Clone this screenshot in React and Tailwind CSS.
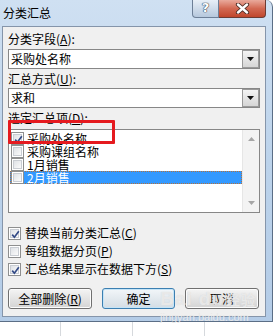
import React from "react";

function Box({ checked }) {
  return (
    <span className="flex h-[13px] w-[13px] shrink-0 border border-[#8e8f8f] bg-white p-[1px]">
      <span className="relative flex h-full w-full items-center justify-center border border-[#c9cdd3] bg-linear-to-br from-[#dfe2e6] to-[#fbfbfb]">
        {checked && (
          <svg width="9" height="9" viewBox="0 0 9 9" className="absolute left-[0px] top-[0px]">
            <path d="M1.2 4.6 L3.4 7.2 L7.8 1.2" fill="none" stroke="#334a86" strokeWidth="1.7" />
          </svg>
        )}
      </span>
    </span>
  );
}

function Combo({ value }) {
  return (
    <div className="flex h-[20px] w-full items-center border border-[#878787] bg-white">
      <span className="flex-1 pl-[2px] leading-[16px]">{value}</span>
      <span className="flex h-[18px] w-[17px] items-center justify-center border border-[#9a9a9a] bg-linear-to-b from-[#f4f4f4] to-[#d6d6d6]">
        <svg width="7" height="4" viewBox="0 0 7 4">
          <path d="M0 0 H7 L3.5 4 Z" fill="#111" />
        </svg>
      </span>
    </div>
  );
}

function Label({ text, k }) {
  return (
    <div className="h-[16px] leading-[16px]">
      {text}(<span className="underline underline-offset-1">{k}</span>):
    </div>
  );
}

function Btn({ children, primary, w }) {
  return (
    <div
      className={`flex h-[21px] items-center justify-center rounded-[3px] border leading-[16px] ${w} ${
        primary
          ? "border-[#3c7fb1] bg-linear-to-b from-[#f2f6f9] to-[#d4dde4] shadow-[inset_0_0_0_1px_#c5e4f7]"
          : "border-[#707070] bg-linear-to-b from-[#f4f4f4] to-[#d4d4d4] shadow-[inset_0_0_0_1px_#fcfcfc]"
      }`}
    >
      {children}
    </div>
  );
}

const items = [
  { name: "采购处名称", checked: true },
  { name: "采购课组名称", checked: false },
  { name: "1月销售", checked: false },
  { name: "2月销售", checked: false, sel: true },
];

export default function App() {
  return (
    <div className="relative flex h-[336px] w-[276px] flex-col overflow-hidden bg-white font-['Noto_Sans_CJK_SC',sans-serif] text-[12px] text-black">
      {/* dialog window */}
      <div className="flex h-[322px] w-[273px] shrink-0 flex-col rounded-tr-[7px] border-r border-b border-[#5b6e86] bg-linear-to-b from-[#cfe0f2] via-[#bcd3eb] to-[#b4cce7]">
        {/* title bar */}
        <div className="flex h-[26px] shrink-0">
          <div className="pl-[3px] pt-[5px] leading-[16px]">分类汇总</div>
          <div className="ml-auto mr-[6px] flex h-[18px]">
            <div className="flex w-[27px] items-center justify-center rounded-bl-[4px] border border-t-0 border-[#6d7f97] bg-linear-to-b from-[#e8eff7] to-[#b6c8dd] pb-[1px] font-['DejaVu_Sans',sans-serif] text-[13px] font-bold text-white [text-shadow:0_0_1px_#2f3f55,0_0_1px_#2f3f55,0_0_1px_#2f3f55]">
              ?
            </div>
            <div className="flex w-[47px] items-center justify-center rounded-br-[4px] border border-l-0 border-t-0 border-[#6d3b33] bg-linear-to-b from-[#e9a99c] via-[#d26852] to-[#c0462c]">
              <svg width="15" height="11" viewBox="0 0 15 11">
                <path d="M3 1.5 L12 9.5 M12 1.5 L3 9.5" stroke="#4a2a24" strokeWidth="4.2" strokeLinecap="round" />
                <path d="M3 1.5 L12 9.5 M12 1.5 L3 9.5" stroke="#fff" strokeWidth="2.4" strokeLinecap="round" />
              </svg>
            </div>
          </div>
        </div>

        {/* body */}
        <div className="ml-[2px] flex h-[291px] w-[264px] flex-col border border-[#8595aa] bg-[#f0f0f0] pl-[5px] pr-[5px] pt-[4px]">
          <Label text="分类字段" k="A" />
          <div className="mt-[2px]">
            <Combo value="采购处名称" />
          </div>
          <div className="mt-[2px]">
            <Label text="汇总方式" k="U" />
          </div>
          <div className="mt-[1px]">
            <Combo value="求和" />
          </div>
          <div className="mt-[2px]">
            <Label text="选定汇总项" k="D" />
          </div>

          {/* list box */}
          <div className="mt-[3px] flex h-[84px] border border-[#878787] bg-white">
            <div className="flex flex-1 flex-col pl-[1px] pt-[2px]">
              {items.map((it) => (
                <div
                  key={it.name}
                  className={`flex h-[13px] items-center border text-[12px] leading-[12px] ${
                    it.sel ? "border-dotted border-[#b4713c] bg-[#3399ff] text-white" : "border-transparent"
                  }`}
                >
                  <Box checked={it.checked} />
                  <span className="ml-[3px]">{it.name}</span>
                </div>
              ))}
            </div>
            <div className="flex w-[17px] flex-col items-center justify-between border-l border-[#e6e6e6] bg-[#f3f3f3] py-[7px]">
              <svg width="7" height="4" viewBox="0 0 7 4">
                <path d="M0 4 H7 L3.5 0 Z" fill="#a6a6a6" />
              </svg>
              <svg width="7" height="4" viewBox="0 0 7 4">
                <path d="M0 0 H7 L3.5 4 Z" fill="#a6a6a6" />
              </svg>
            </div>
          </div>

          {/* options */}
          <div className="mt-[11px] flex flex-col">
            <div className="flex h-[18px] items-center">
              <Box checked />
              <span className="ml-[4px] leading-[16px]">
                替换当前分类汇总(<span className="underline">C</span>)
              </span>
            </div>
            <div className="flex h-[18px] items-center">
              <Box />
              <span className="ml-[4px] leading-[16px]">
                每组数据分页(<span className="underline">P</span>)
              </span>
            </div>
            <div className="flex h-[18px] items-center">
              <Box checked />
              <span className="ml-[4px] leading-[16px]">
                汇总结果显示在数据下方(<span className="underline">S</span>)
              </span>
            </div>
          </div>

          {/* buttons */}
          <div className="mt-[10px] flex">
            <Btn w="w-[84px]">
              全部删除(<span className="underline">R</span>)
            </Btn>
            <div className="ml-[10px]">
              <Btn primary w="w-[73px]">确定</Btn>
            </div>
            <div className="ml-[10px]">
              <Btn w="w-[74px]">取消</Btn>
            </div>
          </div>
        </div>
      </div>

      {/* sheet grid under the dialog */}
      <div className="flex h-[14px]">
        <div className="w-[61px] border-r border-[#d6d9dd]" />
        <div className="w-[72px] border-r border-[#d6d9dd]" />
        <div className="w-[72px] border-r border-[#d6d9dd]" />
      </div>

      {/* red annotation box */}
      <div className="absolute left-[8px] top-[120px] h-[24px] w-[107px] rounded-[1px] border-[3px] border-[#e51a1f]" />

      {/* watermark */}
      <div className="pointer-events-none absolute left-[160px] top-[289px] flex flex-col items-start leading-none text-white/50">
        <span className="font-['Liberation_Sans',sans-serif] text-[19px] font-bold tracking-[1px] [text-shadow:0_0_1px_#d0d0d0]">
          Bai du<span className="ml-[2px] font-['Noto_Sans_CJK_SC',sans-serif] text-[14px]">经验</span>
        </span>
        <span className="mt-[4px] font-['Liberation_Sans',sans-serif] text-[11px] text-[#e8e8e8]">jingyan.baidu.com</span>
      </div>
    </div>
  );
}
